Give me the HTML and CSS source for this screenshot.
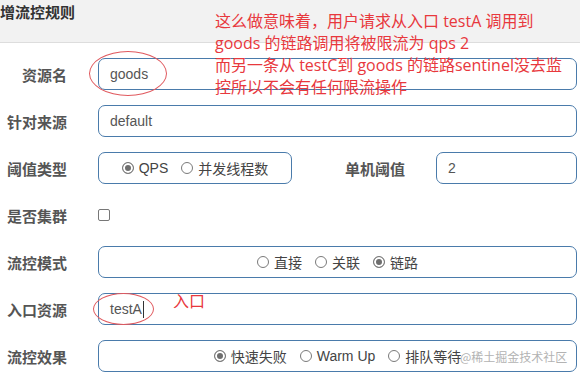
FILE: index.html
```html
<!DOCTYPE html>
<html lang="zh-CN">
<head>
    <meta charset="UTF-8">
    <meta name="viewport" content="width=device-width, initial-scale=1.0">
    <title>新增流控规则</title>
    <link rel="stylesheet" href="styles.css">
</head>
<body>
    <!-- Dialog header -->
    <div class="header">
        <h4 class="title">增流控规则</h4>
    </div>

    <!-- Rule form -->
    <form class="rule-form">
        <div class="row">
            <label class="label">资源名</label>
            <div class="form-control">goods</div>
        </div>

        <div class="row">
            <label class="label">针对来源</label>
            <div class="form-control">default</div>
        </div>

        <div class="row">
            <label class="label">阈值类型</label>
            <div class="split">
                <div class="radio-box grade-box">
                    <span class="radio"><span class="dot checked"></span>QPS</span>
                    <span class="radio"><span class="dot"></span>并发线程数</span>
                </div>
                <label class="label sub-label">单机阈值</label>
                <div class="form-control count">2</div>
            </div>
        </div>

        <div class="row">
            <label class="label">是否集群</label>
            <div><span class="checkbox"></span></div>
        </div>

        <div class="row">
            <label class="label">流控模式</label>
            <div class="radio-box">
                <span class="radio"><span class="dot"></span>直接</span>
                <span class="radio"><span class="dot"></span>关联</span>
                <span class="radio"><span class="dot checked"></span>链路</span>
            </div>
        </div>

        <div class="row">
            <label class="label">入口资源</label>
            <div class="form-control">testA<span class="caret"></span></div>
        </div>

        <div class="row">
            <label class="label">流控效果</label>
            <div class="radio-box">
                <span class="radio"><span class="dot checked"></span>快速失败</span>
                <span class="radio"><span class="dot"></span>Warm Up</span>
                <span class="radio"><span class="dot"></span>排队等待</span>
            </div>
        </div>
    </form>

    <!-- Hand-drawn annotations on top of the screenshot -->
    <div class="note">
        这么做意味着，用户请求从入口 testA 调用到<br>
        goods 的链路调用将被限流为 qps 2<br>
        而另一条从 testC到 goods 的链路sentinel没去监<br>
        控所以不会有任何限流操作
    </div>
    <span class="mark mark-goods"></span>
    <span class="mark mark-entry"></span>
    <span class="note-entry">入口</span>
    <span class="watermark">@稀土掘金技术社区</span>
</body>
</html>
```

FILE: styles.css
```css
body {
    margin: 0;
    width: 580px;
    height: 374px;
    overflow: hidden;
    position: relative;
    background: #fff;
    font-family: "Liberation Sans", "Noto Sans CJK SC", sans-serif;
    color: #555;
}

.header {
    height: 42px;
    background: #f2f2f2;
    border-bottom: 1px solid #ddd;
}

.title {
    margin: 0;
    padding-top: 2px;
    font-size: 15px;
    line-height: 20px;
    font-weight: bold;
    color: #333;
    font-family: "Noto Sans CJK SC", sans-serif;
}

.rule-form {
    padding: 15px 3px 0 0;
}

.row {
    display: grid;
    grid-template-columns: 67px 1fr;
    column-gap: 31px;
    align-items: center;
    height: 32px;
    margin-bottom: 15px;
}

.label {
    text-align: right;
    font-size: 15px;
    font-weight: bold;
    color: #555;
    font-family: "Noto Sans CJK SC", sans-serif;
    white-space: nowrap;
}

.form-control {
    box-sizing: border-box;
    height: 32px;
    padding: 0 11px;
    border: 1px solid #4a7bab;
    border-radius: 7px;
    font-size: 14px;
    line-height: 30px;
    color: #555;
}

.caret {
    display: inline-block;
    width: 1px;
    height: 17px;
    margin-left: 1px;
    background: #333;
    vertical-align: -4px;
}

.split {
    display: flex;
    align-items: center;
}

.grade-box {
    width: 194px;
}

.sub-label {
    width: 61px;
    margin: 0 30px 0 53px;
    text-align: left;
}

.count {
    flex: 1;
}

.radio-box {
    box-sizing: border-box;
    height: 32px;
    display: flex;
    justify-content: center;
    align-items: center;
    gap: 13px;
    border: 1px solid #4a7bab;
    border-radius: 7px;
}

.radio {
    display: inline-flex;
    align-items: center;
    gap: 5px;
    font-size: 14px;
    color: #444;
    font-family: "Liberation Sans", "Noto Sans CJK SC", sans-serif;
}

.dot {
    box-sizing: border-box;
    width: 12px;
    height: 12px;
    border: 1px solid #7a7a7a;
    border-radius: 50%;
    background: #fff;
}

.dot.checked {
    background: #6e6e6e;
    box-shadow: inset 0 0 0 2px #fff;
}

.checkbox {
    display: block;
    box-sizing: border-box;
    width: 12px;
    height: 12px;
    border: 1px solid #777;
    border-radius: 2px;
}

.note {
    position: absolute;
    left: 215px;
    top: 10px;
    font-size: 16px;
    line-height: 22px;
    color: #e8383d;
    font-family: "Open Sans", "Noto Sans CJK SC", sans-serif;
    white-space: nowrap;
}

.mark {
    position: absolute;
    border: 1px solid #e05a5f;
    border-radius: 50%;
}

.mark-goods {
    left: 89px;
    top: 51px;
    width: 76px;
    height: 43px;
}

.mark-entry {
    left: 93px;
    top: 293px;
    width: 59px;
    height: 30px;
}

.note-entry {
    position: absolute;
    left: 173px;
    top: 289px;
    font-size: 16px;
    line-height: 22px;
    color: #e8383d;
    font-family: "Noto Sans CJK SC", sans-serif;
}

.watermark {
    position: absolute;
    left: 460px;
    top: 348px;
    font-size: 12px;
    line-height: 18px;
    color: #b3b3b3;
    font-family: "Noto Sans CJK SC", sans-serif;
}
```
